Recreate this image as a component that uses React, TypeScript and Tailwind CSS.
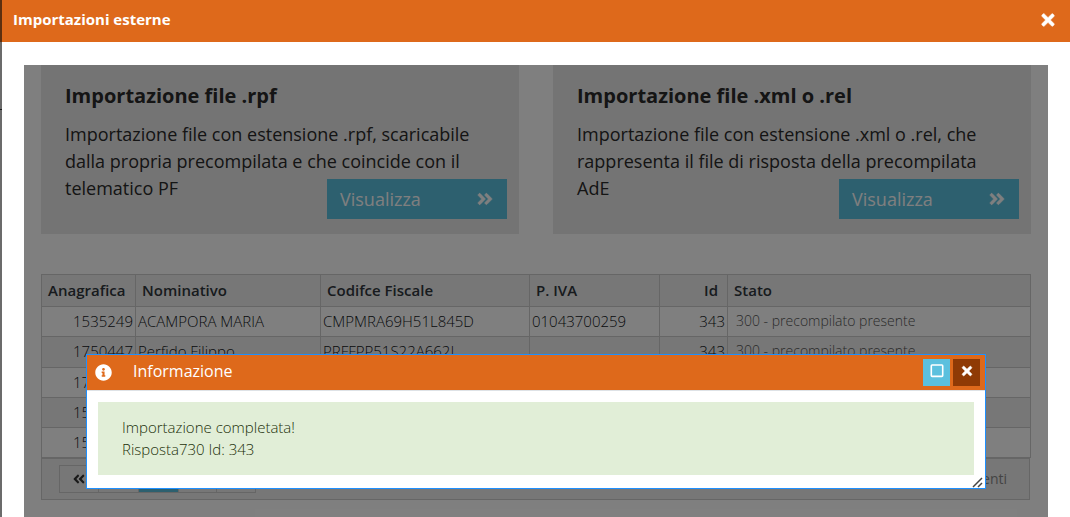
import { FaAngleDoubleLeft, FaAngleDoubleRight, FaAngleLeft, FaAngleRight, FaInfoCircle, FaTimes } from "react-icons/fa";

const cards = [
  {
    title: "Importazione file .rpf",
    text: "Importazione file con estensione .rpf, scaricabile dalla propria precompilata e che coincide con il telematico PF",
  },
  {
    title: "Importazione file .xml o .rel",
    text: "Importazione file con estensione .xml o .rel, che rappresenta il file di risposta della precompilata AdE",
  },
];

const rows = [
  { code: "1535249", name: "ACAMPORA MARIA", tax: "CMPMRA69H51L845D", vat: "01043700259" },
  { code: "1750447", name: "Perfido Filippo", tax: "PRFFPP51S22A662L", vat: "" },
  { code: "1750447", name: "", tax: "", vat: "" },
  { code: "1535249", name: "", tax: "", vat: "" },
  { code: "1535249", name: "", tax: "", vat: "" },
];

function Card({ title, text }: { title: string; text: string }) {
  return (
    <section className="relative h-[169px] bg-[#e8e8e8] px-6 pt-[17px] text-[#2a2a2a]">
      <h2 className="text-xl leading-7 font-bold">{title}</h2>
      <p className="mt-[11px] text-lg leading-[27px]">{text}</p>
      <button className="absolute right-3 bottom-[15px] flex h-10 w-[180px] items-center justify-between bg-[#5bc0de] px-[13px] text-lg text-white">
        Visualizza
        <FaAngleDoubleRight size={18} stroke="currentColor" strokeWidth={16} />
      </button>
    </section>
  );
}

function Grid() {
  const head = "border border-[#ccc] px-[6px] pb-[2px] font-semibold";
  const cell = "border border-[#ccc] px-[2px] pb-[2px]";
  return (
    <div className="mt-10 text-[15px] leading-5 text-[#30363c]">
      <table className="w-full table-fixed border-collapse border border-[#ccc]">
        <colgroup>
          <col className="w-[94px]" />
          <col className="w-[185px]" />
          <col className="w-[209px]" />
          <col className="w-[130px]" />
          <col className="w-[68px]" />
          <col />
        </colgroup>
        <thead>
          <tr className="h-8 bg-[#efefef] text-left">
            <th className={head}>Anagrafica</th>
            <th className={head}>Nominativo</th>
            <th className={head}>Codifce Fiscale</th>
            <th className={head}>P. IVA</th>
            <th className="border border-[#ccc] px-[9px] pb-[2px] text-right font-semibold">Id</th>
            <th className={head}>Stato</th>
          </tr>
        </thead>
        <tbody className="font-light text-[#111418]">
          {rows.map((r, i) => (
            <tr key={i} className={i === 1 ? "h-[31px] bg-[#efefef]" : "h-[30px] even:bg-[#efefef]"}>
              <td className="border border-[#ccc] px-[2px] pb-[2px] text-right">{r.code}</td>
              <td className={cell}>{r.name}</td>
              <td className={cell}>{r.tax}</td>
              <td className={cell}>{r.vat}</td>
              <td className="border border-[#ccc] px-[2px] pb-[2px] text-right">343</td>
              <td className="border border-[#ccc] px-2 pb-[2px] text-sm text-[#555]">300 - precompilato presente</td>
            </tr>
          ))}
        </tbody>
      </table>
      <div className="mr-px flex h-[42px] items-center justify-between border border-[#ccc] bg-[#efefef] pr-[22px] pl-[17px]">
        <nav aria-label="Pagine" className="flex h-7 divide-x divide-[#ccc] border border-[#ccc] text-[#333]">
          <button aria-label="Prima pagina" className="flex w-[39px] items-center justify-center">
            <FaAngleDoubleLeft size={14} />
          </button>
          <button aria-label="Pagina precedente" className="flex w-10 items-center justify-center">
            <FaAngleLeft size={14} />
          </button>
          <button aria-label="Pagina 1" className="w-10 bg-[#5bc0de] text-white" />
          <button aria-label="Pagina successiva" className="flex w-[38px] items-center justify-center">
            <FaAngleRight size={14} />
          </button>
          <button aria-label="Ultima pagina" className="flex w-[38px] items-center justify-center">
            <FaAngleDoubleRight size={14} />
          </button>
        </nav>
        <span className="text-sm text-[#888]">1 - 5 di 5 elementi</span>
      </div>
    </div>
  );
}

function InfoDialog() {
  return (
    <div
      role="dialog"
      aria-labelledby="info-title"
      className="relative w-full max-w-[900px] self-start border border-[#1e90ff] bg-white"
    >
      <header className="flex h-9 items-center border-b border-[#dee2e6] bg-[#de691b] pr-[5px] pl-2 text-white">
        <FaInfoCircle size={17} />
        <h2 id="info-title" className="ml-[21px] flex-1 pb-[3px] text-base">
          Informazione
        </h2>
        <button aria-label="Ingrandisci" className="mr-[3px] flex h-[27px] w-[27px] justify-center bg-[#5bc0de] pt-[5px]">
          <svg viewBox="0 0 14 14" className="h-[14px] w-[14px]" fill="none" stroke="currentColor" strokeWidth="1.6">
            <rect x="1.3" y="1" width="11.4" height="11.4" rx="0.8" />
          </svg>
        </button>
        <button aria-label="Chiudi" className="flex h-[27px] w-[27px] justify-center bg-[#8f3a05] pt-[5px]">
          <FaTimes size={14} stroke="currentColor" strokeWidth={20} />
        </button>
      </header>
      <div className="px-[11px] pt-[11px] pb-[13px]">
        <div className="bg-[#e1eed7] px-6 pt-[14px] pb-[15px] text-[15px] leading-[22px] font-light text-[#1c3009]">
          <p>Importazione completata!</p>
          <p>Risposta730 Id: 343</p>
        </div>
      </div>
      <svg viewBox="0 0 12 12" className="absolute right-px bottom-0 h-3 w-3" stroke="#444" strokeWidth="1.5">
        <path d="M1 11 L10 2 M6 11 L10 7" />
      </svg>
    </div>
  );
}

export default function App() {
  return (
    <div className="flex min-h-screen font-['Open_Sans',sans-serif]">
      <div className="flex w-[2px] flex-col bg-[#6b6b6b]">
        <div className="h-[42px] bg-[#5c2f10]" />
        <div className="mt-[67px] h-px bg-[#1a1a1a]" />
      </div>
      <main className="flex flex-1 flex-col bg-white">
        <header className="flex h-[42px] items-center justify-between bg-[#de691b] pr-[13px] pl-[11px] text-white">
          <h1 className="pb-[3px] text-[15px] font-bold">Importazioni esterne</h1>
          <button aria-label="Chiudi finestra" className="pb-[3px]">
            <FaTimes size={18} stroke="currentColor" strokeWidth={20} />
          </button>
        </header>
        <div className="flex flex-1 flex-col px-[22px] pt-[23px]">
          <div className="relative flex-1 px-[17px]">
            <div className="grid grid-cols-2 gap-[34px]">
              {cards.map((c) => (
                <Card key={c.title} title={c.title} text={c.text} />
              ))}
            </div>
            <Grid />
            <div className="absolute inset-0 flex justify-center bg-black/50 pt-[289px]">
              <InfoDialog />
            </div>
          </div>
        </div>
      </main>
    </div>
  );
}
